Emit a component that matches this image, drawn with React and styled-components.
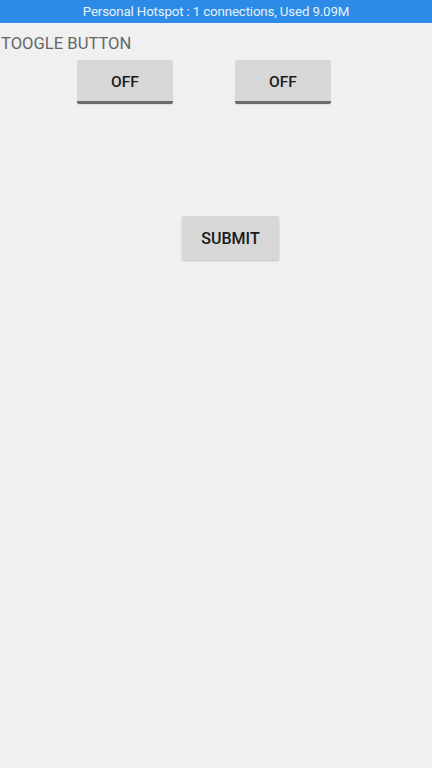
import React, { useState } from "react";
import styled, { createGlobalStyle } from "styled-components";

const Global = createGlobalStyle`
  html, body { margin: 0; padding: 0; background: #f0f0f0; }
  body { font-family: Roboto, "Liberation Sans", sans-serif; }
`;

export default function App() {
  const [a, setA] = useState(false);
  const [b, setB] = useState(false);
  return (
    <>
      <Global />
      <Screen>
        <StatusBar>Personal Hotspot : 1 connections, Used 9.09M</StatusBar>
        <Title>TOOGLE BUTTON</Title>
        <ToggleRow>
          <Toggle on={a} onClick={() => setA(!a)}>{a ? "ON" : "OFF"}</Toggle>
          <Toggle on={b} onClick={() => setB(!b)}>{b ? "ON" : "OFF"}</Toggle>
        </ToggleRow>
        <SubmitRow>
          <Submit>SUBMIT</Submit>
        </SubmitRow>
      </Screen>
    </>
  );
}

const Screen = styled.div`
  width: 432px;
  height: 768px;
  background: #f0f0f0;
  display: flex;
  flex-direction: column;
  overflow: hidden;
`;

const StatusBar = styled.div`
  height: 23px;
  background: #2b8be6;
  color: #e8f2fc;
  font-size: 13.3px;
  display: flex;
  align-items: center;
  justify-content: center;
  letter-spacing: -0.15px;
`;

const Title = styled.div`
  margin-top: 11px;
  font-size: 16.6px;
  color: #666;
  line-height: 19px;
  padding-left: 1px;
`;

const ToggleRow = styled.div`
  display: flex;
  gap: 62px;
  padding-left: 77px;
  margin-top: 7px;
`;

const Toggle = styled.button`
  width: 96px;
  height: 44px;
  border: none;
  border-radius: 2px;
  background: #d7d7d7;
  border-bottom: 3px solid ${(p) => (p.on ? "#2b8be6" : "#6a6a6a")};
  font-family: Roboto, "Liberation Sans", sans-serif;
  font-size: 15.5px;
  font-weight: 500;
  color: #1a1a1a;
  padding: 0;
  padding-top: 2px;
  box-shadow: 0 1px 1px rgba(0, 0, 0, 0.08);
`;

const SubmitRow = styled.div`
  display: flex;
  padding-left: 182px;
  margin-top: 112px;
`;

const Submit = styled.button`
  width: 97px;
  height: 44px;
  border: none;
  border-radius: 2px;
  background: #d7d7d7;
  font-family: Roboto, "Liberation Sans", sans-serif;
  font-size: 16px;
  font-weight: 500;
  color: #1a1a1a;
  padding: 0;
  box-shadow: 0 1px 2px rgba(0, 0, 0, 0.2);
`;
